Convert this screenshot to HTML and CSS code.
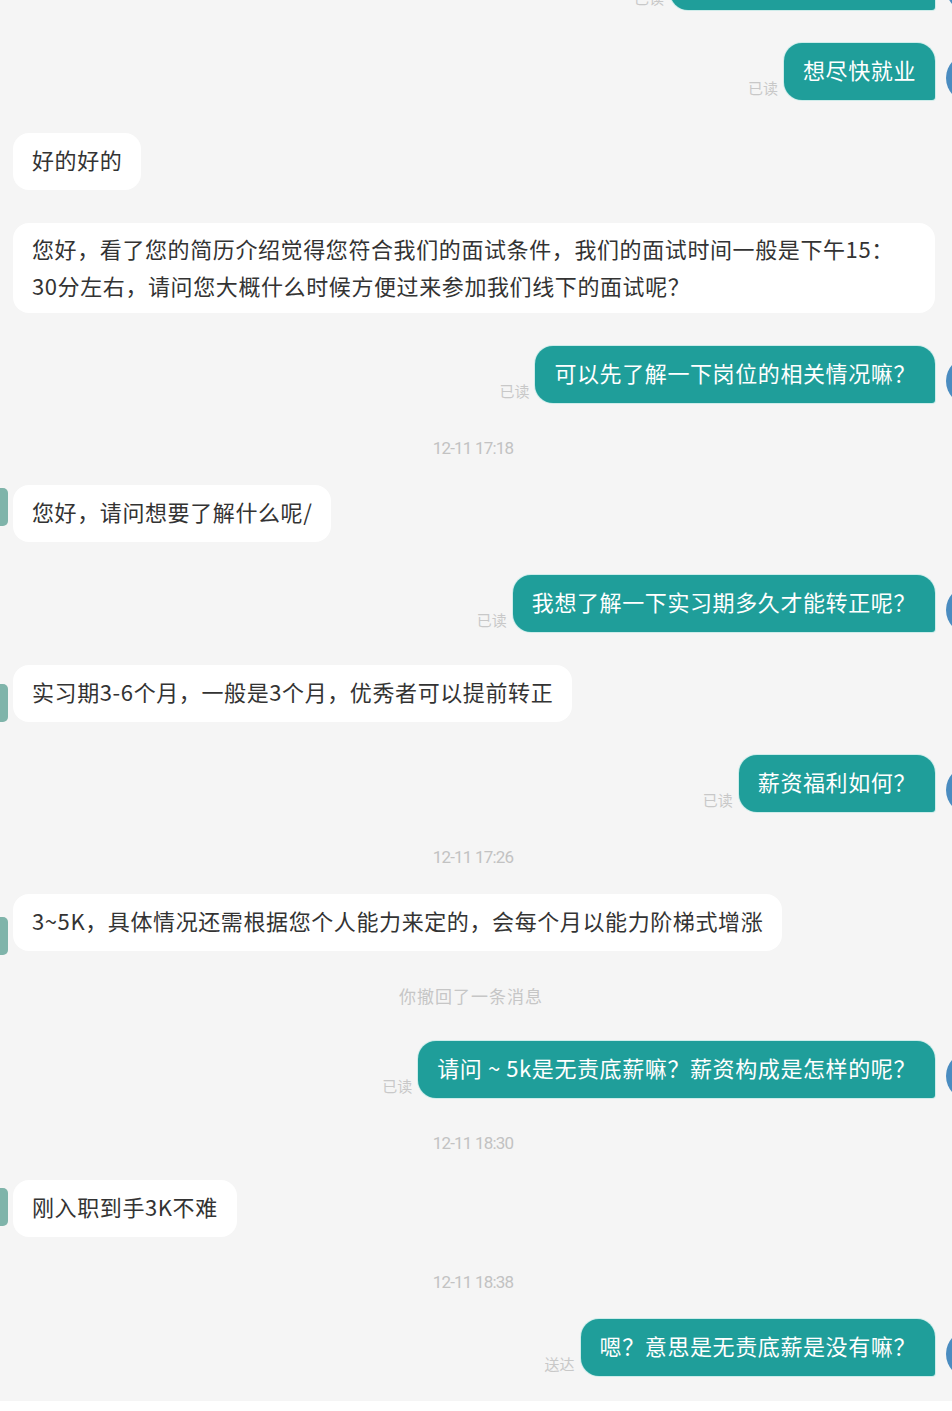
FILE: index.html
```html
<!DOCTYPE html>
<html lang="zh-CN">
<head>
    <meta charset="UTF-8">
    <meta name="viewport" content="width=device-width, initial-scale=1.0">
    <title>聊天记录</title>
    <link rel="stylesheet" href="styles.css">
</head>
<body>

<div class="chat">

    <!-- top message, its text is scrolled out of view -->
    <div class="msg out first">
        <span class="status">已读</span>
        <div class="bubble cut">&nbsp;</div>
        <span class="avatar"></span>
    </div>

    <div class="msg out">
        <span class="status">已读</span>
        <div class="bubble">想尽快就业</div>
        <span class="avatar"></span>
    </div>

    <div class="msg in">
        <div class="bubble">好的好的</div>
    </div>

    <div class="msg in">
        <div class="bubble wide">您好，看了您的简历介绍觉得您符合我们的面试条件，我们的面试时间一般是下午15：<br>30分左右，请问您大概什么时候方便过来参加我们线下的面试呢？</div>
    </div>

    <div class="msg out">
        <span class="status">已读</span>
        <div class="bubble">可以先了解一下岗位的相关情况嘛？</div>
        <span class="avatar"></span>
    </div>

    <div class="time">12-11 17:18</div>

    <div class="msg in">
        <span class="avatar av-1"></span>
        <div class="bubble">您好，请问想要了解什么呢/</div>
    </div>

    <div class="msg out">
        <span class="status">已读</span>
        <div class="bubble">我想了解一下实习期多久才能转正呢？</div>
        <span class="avatar"></span>
    </div>

    <div class="msg in">
        <span class="avatar av-2"></span>
        <div class="bubble">实习期3-6个月，一般是3个月，优秀者可以提前转正</div>
    </div>

    <div class="msg out">
        <span class="status">已读</span>
        <div class="bubble">薪资福利如何？</div>
        <span class="avatar"></span>
    </div>

    <div class="time">12-11 17:26</div>

    <div class="msg in">
        <span class="avatar av-3"></span>
        <div class="bubble">3~5K，具体情况还需根据您个人能力来定的，会每个月以能力阶梯式增涨</div>
    </div>

    <div class="notice">你撤回了一条消息</div>

    <div class="msg out">
        <span class="status">已读</span>
        <div class="bubble">请问 ~ 5k是无责底薪嘛？薪资构成是怎样的呢？</div>
        <span class="avatar"></span>
    </div>

    <div class="time">12-11 18:30</div>

    <div class="msg in">
        <span class="avatar av-4"></span>
        <div class="bubble">刚入职到手3K不难</div>
    </div>

    <div class="time">12-11 18:38</div>

    <div class="msg out">
        <span class="status">送达</span>
        <div class="bubble">嗯？意思是无责底薪是没有嘛？</div>
        <span class="avatar"></span>
    </div>

    <div class="footer"></div>

</div>

</body>
</html>
```

FILE: styles.css
```css
html, body {
    margin: 0;
    height: 100%;
    overflow: hidden;
    background-color: #f5f5f5;
}

body {
    font-family: "Noto Sans CJK SC", "Noto Sans", sans-serif;
}

.chat {
    display: flex;
    flex-direction: column;
    height: 1411px;
}

.msg {
    display: flex;
    align-items: flex-start;
    margin-top: 33px;
}

.msg.first {
    margin-top: -47px;
}

.msg.out {
    justify-content: flex-end;
}

.msg.in {
    padding-right: 17px;
}

.bubble {
    font-size: 22px;
    line-height: 37px;
    letter-spacing: 0.6px;
    padding: 8px 19px 12px;
    white-space: nowrap;
}

.out .bubble {
    background-color: #1f9e9a;
    color: #fff;
    border-radius: 18px 18px 3px 18px;
    box-shadow: 0 0 0 1px rgba(190, 232, 230, 0.7);
}

.bubble.cut {
    width: 227px;
}

.in .bubble {
    background-color: #fff;
    color: #333;
    border-radius: 16px;
    margin-left: 13px;
}

.in .avatar + .bubble {
    margin-left: 5px;
}

.bubble.wide {
    flex: 1;
    padding: 7px 19px 9px;
}

/* read / delivered mark left of my bubbles */
.status {
    align-self: flex-end;
    font-size: 15px;
    line-height: 20px;
    color: #c8c8c8;
    margin: 0 6px 2px 0;
}

/* avatars sit mostly outside the screen edge and never stretch the row */
.out .avatar {
    flex: none;
    width: 48px;
    height: 48px;
    border-radius: 50%;
    background-color: #4a8cc0;
    margin: 11px -42px -20px 11px;
}

.in .avatar {
    flex: none;
    width: 44px;
    height: 38px;
    border-radius: 5px;
    background-color: #7fb4aa;
    margin-left: -36px;
    margin-bottom: -30px;
}

.av-1 { margin-top: 3px; }
.av-2 { margin-top: 19px; }
.av-3 { margin-top: 23px; }
.av-4 { margin-top: 8px; }

.time {
    text-align: center;
    margin-top: 33px;
    padding-right: 6px;
    font-family: Roboto, "Noto Sans", sans-serif;
    font-size: 17px;
    line-height: 24px;
    letter-spacing: -0.8px;
    color: #c2c2c2;
}

.time + .msg {
    margin-top: 25px;
}

.notice {
    text-align: center;
    margin-top: 33px;
    padding-right: 10px;
    font-size: 17px;
    line-height: 24px;
    letter-spacing: 1px;
    color: #c6c6c6;
}

.footer {
    flex: 1;
    margin-top: 25px;
    background-color: #fff;
}
```
